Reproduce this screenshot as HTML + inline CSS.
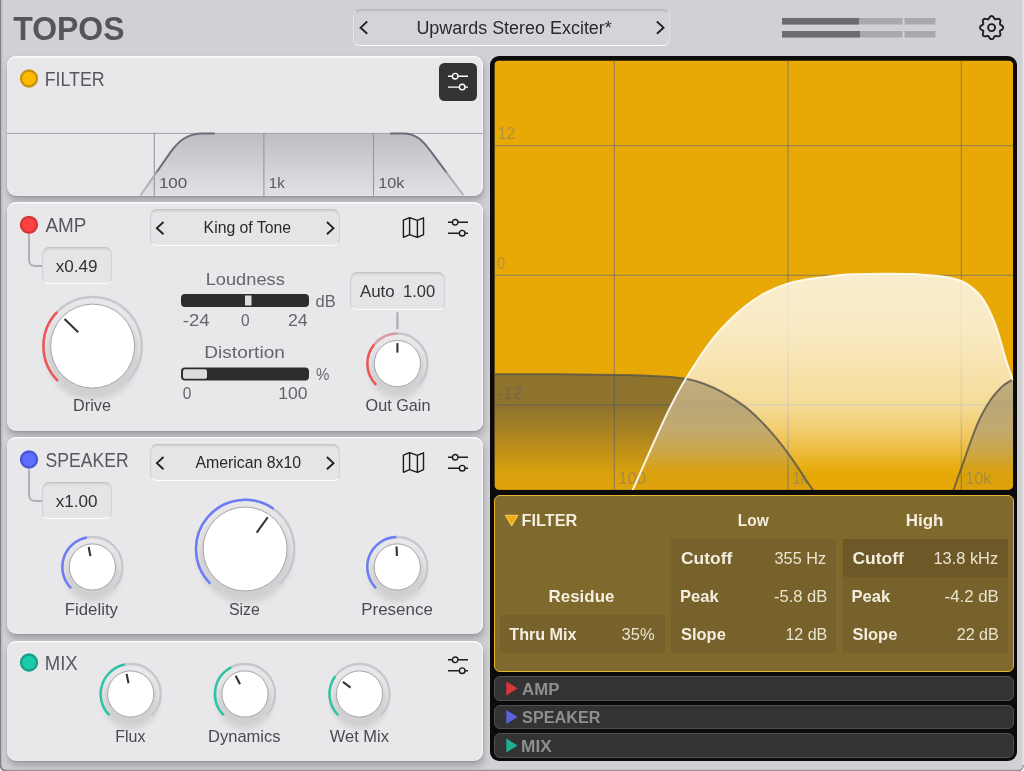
<!DOCTYPE html>
<html><head><meta charset="utf-8"><title>TOPOS</title><style>
html,body{margin:0;padding:0}
body{width:1024px;height:771px;overflow:hidden;background:#d1d0d4;position:relative;font-family:"Liberation Sans",sans-serif}
div{position:absolute;box-sizing:border-box}
.pan{background:#e8e7ea;border-radius:9px;box-shadow:1px 5px 7px rgba(50,50,62,.29),0 1px 1.5px rgba(50,50,62,.14),inset 0 1.4px 0 rgba(255,255,255,.8),inset -1.2px 0 0 rgba(255,255,255,.5)}
.pre{background:#e5e4e7;border-radius:7px;border:1px solid;border-color:rgba(0,0,0,.15) rgba(120,120,130,.16) rgba(255,255,255,.95) rgba(120,120,130,.16);box-shadow:inset 0 1.5px 1.5px rgba(0,0,0,.08)}
.hd{background:#d4d3d7;border-color:rgba(0,0,0,.13) rgba(255,255,255,.4) rgba(255,255,255,.85) rgba(255,255,255,.4)}
svg{position:absolute;left:0;top:0;will-change:transform}
svg text{font-family:"Liberation Sans",sans-serif}
</style></head>
<body>
<div class="pre hd" style="left:353.3px;top:8.8px;width:316.7px;height:37.5px;"></div>
<div class="pan" style="left:6.7px;top:56.2px;width:476.5px;height:139.5px;"></div>
<div class="pan" style="left:6.7px;top:202px;width:476.5px;height:228.7px;"></div>
<div class="pan" style="left:6.7px;top:437px;width:476.5px;height:196.9px;"></div>
<div class="pan" style="left:6.7px;top:640.6px;width:476.5px;height:120.5px;"></div>
<div class="" style="left:439px;top:62.5px;width:38px;height:38px;background:#333;border-radius:5.5px;"></div>
<div class="pre" style="left:41.7px;top:246.9px;width:69.9px;height:37.4px;"></div>
<div class="pre" style="left:150.4px;top:209.3px;width:189.6px;height:36.4px;"></div>
<div class="pre" style="left:350.2px;top:272.2px;width:94.7px;height:37.4px;"></div>
<div class="pre" style="left:41.7px;top:481.9px;width:69.9px;height:37.4px;"></div>
<div class="pre" style="left:150.4px;top:444.3px;width:189.6px;height:36.4px;"></div>
<div class="" style="left:490px;top:56.1px;width:527.1px;height:704.9px;background:#0b0b0b;border-radius:9px;"></div>
<div class="" style="left:493.5px;top:495px;width:520px;height:177px;background:#80692d;border-radius:6px;box-sizing:border-box;border:1.5px solid #e6b52e;"></div>
<div class="" style="left:499.5px;top:615px;width:165.5px;height:38px;background:#77622c;"></div>
<div class="" style="left:671px;top:539px;width:165px;height:114px;background:#77622c;"></div>
<div class="" style="left:842.5px;top:539px;width:165px;height:114px;background:#77622c;"></div>
<div class="" style="left:842.5px;top:539px;width:165px;height:38px;background:#6d5927;"></div>
<div class="" style="left:493.5px;top:676.1px;width:520px;height:24.5px;background:#333;border-radius:6px;box-sizing:border-box;border:1px solid #505050;"></div>
<div class="" style="left:493.5px;top:704.7px;width:520px;height:24.5px;background:#333;border-radius:6px;box-sizing:border-box;border:1px solid #505050;"></div>
<div class="" style="left:493.5px;top:733.3px;width:520px;height:24.5px;background:#333;border-radius:6px;box-sizing:border-box;border:1px solid #505050;"></div>
<svg width="1024" height="771" viewBox="0 0 1024 771">
<defs><filter id="kb" x="-30%" y="-30%" width="160%" height="160%"><feGaussianBlur stdDeviation="3"/></filter>
<clipPath id="mc"><path d="M6.7 120H483.2V187Q483.2 195.7 474.2 195.7H15.7Q6.7 195.7 6.7 187Z"/></clipPath>
<linearGradient id="mf" gradientUnits="userSpaceOnUse" x1="0" y1="133" x2="0" y2="195"><stop offset="0" stop-color="#bebdc2"/><stop offset="1" stop-color="#e1e0e4"/></linearGradient>
<linearGradient id="ms" gradientUnits="userSpaceOnUse" x1="0" y1="133" x2="0" y2="195"><stop offset="0" stop-color="#6c6b7c"/><stop offset=".6" stop-color="#6c6b7c"/><stop offset=".66" stop-color="#acabb0"/><stop offset="1" stop-color="#b4b3b8"/></linearGradient>
<clipPath id="gc"><rect x="494.4" y="60.4" width="518.8000000000001" height="429.5" rx="5"/></clipPath>
<linearGradient id="wf" gradientUnits="userSpaceOnUse" x1="0" y1="273" x2="0" y2="490"><stop offset="0" stop-color="#fff" stop-opacity="0.8"/><stop offset="0.26" stop-color="#fff" stop-opacity="0.76"/><stop offset="0.41" stop-color="#fff" stop-opacity="0.69"/><stop offset="0.61" stop-color="#fff" stop-opacity="0.58"/><stop offset="0.72" stop-color="#fff" stop-opacity="0.42"/><stop offset="0.82" stop-color="#fff" stop-opacity="0.22"/><stop offset="0.89" stop-color="#fff" stop-opacity="0.06"/><stop offset="0.93" stop-color="#fff" stop-opacity="0"/><stop offset="1" stop-color="#fff" stop-opacity="0"/></linearGradient>
<linearGradient id="df" gradientUnits="userSpaceOnUse" x1="0" y1="374" x2="0" y2="490"><stop offset="0" stop-color="#4a4a4a" stop-opacity="0.57"/><stop offset="0.27" stop-color="#4a4a4a" stop-opacity="0.57"/><stop offset="0.5" stop-color="#4a4a4a" stop-opacity="0.4"/><stop offset="0.69" stop-color="#4a4a4a" stop-opacity="0.23"/><stop offset="0.85" stop-color="#4a4a4a" stop-opacity="0.09"/><stop offset="1" stop-color="#4a4a4a" stop-opacity="0.06"/></linearGradient>
<clipPath id="wc"><path d="M632.5 490.5C634.6 485.8 640.8 471.8 644.9 462.5C649.0 453.2 653.2 443.6 657.4 434.5C661.5 425.4 665.6 416.3 669.8 408.0C673.9 399.7 677.6 392.7 682.3 384.6C687.0 376.6 692.7 367.5 697.9 359.7C703.1 351.9 708.3 344.4 713.5 337.9C718.7 331.4 723.8 325.9 729.0 320.7C734.2 315.5 739.4 310.8 744.6 306.7C749.8 302.6 755.0 298.9 760.2 295.8C765.4 292.7 771.1 290.1 775.8 288.0C780.5 285.9 783.0 284.8 788.2 283.4C793.4 281.9 801.6 280.3 806.9 279.3C812.2 278.3 813.3 278.4 820.0 277.6C826.7 276.8 837.2 275.2 847.2 274.6C857.2 274.0 868.9 273.8 879.7 273.7C890.5 273.6 902.3 273.6 912.0 274.0C921.7 274.4 931.7 275.4 938.0 276.0C944.3 276.6 946.2 277.0 950.0 277.8C953.8 278.6 957.5 279.6 960.7 280.8C963.9 282.0 966.3 283.3 969.0 285.2C971.7 287.1 974.5 289.4 977.0 292.0C979.5 294.6 981.9 297.2 984.0 300.5C986.1 303.8 988.1 307.8 989.9 311.6C991.7 315.4 993.4 319.2 995.0 323.5C996.6 327.8 997.8 331.4 999.6 337.5C1001.4 343.6 1003.8 352.8 1006.0 360.0C1008.2 367.2 1011.8 377.1 1013.0 380.5L1013 491Z"/></clipPath>
<linearGradient id="ov" gradientUnits="userSpaceOnUse" x1="0" y1="374" x2="0" y2="490"><stop offset="0" stop-color="#8c6400" stop-opacity="0.3"/><stop offset="0.27" stop-color="#8c6400" stop-opacity="0.3"/><stop offset="0.48" stop-color="#8c6400" stop-opacity="0.14"/><stop offset="0.7" stop-color="#8c6400" stop-opacity="0"/><stop offset="1" stop-color="#8c6400" stop-opacity="0"/></linearGradient></defs>
<text transform="translate(13.30 39.9) scale(0.9508 1)" font-size="33.6" fill="#55555a" font-weight="700">TOPOS</text>
<path d="M367.2 21.5L360.6 27.65L367.2 33.8" fill="none" stroke="#222" stroke-width="1.9"/>
<path d="M656.9 21.5L663.5 27.65L656.9 33.8" fill="none" stroke="#222" stroke-width="1.9"/>
<text transform="translate(416.38 34.0) scale(1.0199 1)" font-size="17.6" fill="#2a2a2c">Upwards Stereo Exciter*</text>
<rect x="782" y="18" width="120.5" height="6.5" fill="#a9a8ac"/>
<rect x="904.5" y="18" width="31" height="6.5" fill="#a9a8ac"/>
<rect x="782" y="31" width="120.5" height="6.5" fill="#a9a8ac"/>
<rect x="904.5" y="31" width="31" height="6.5" fill="#a9a8ac"/>
<rect x="782" y="18" width="77" height="6.5" fill="#6c6c6f"/>
<rect x="782" y="31" width="78" height="6.5" fill="#6c6c6f"/>
<path d="M991.60 16.05L991.96 16.07L992.32 16.15L992.67 16.31L993.00 16.54L993.30 16.85L993.58 17.21L993.84 17.60L994.07 18.00L994.28 18.38L994.49 18.71L994.70 18.98L994.94 19.17L995.20 19.28L995.50 19.31L995.84 19.27L996.23 19.18L996.65 19.07L997.09 18.95L997.55 18.85L998.00 18.79L998.43 18.79L998.83 18.86L999.19 18.99L999.50 19.19L999.77 19.43L1000.01 19.70L1000.21 20.01L1000.34 20.37L1000.41 20.77L1000.41 21.20L1000.35 21.65L1000.25 22.11L1000.13 22.55L1000.02 22.97L999.93 23.36L999.89 23.70L999.92 24.00L1000.03 24.26L1000.22 24.50L1000.49 24.71L1000.82 24.92L1001.20 25.13L1001.60 25.36L1001.99 25.62L1002.35 25.90L1002.66 26.20L1002.89 26.53L1003.05 26.88L1003.13 27.24L1003.15 27.60L1003.13 27.96L1003.05 28.32L1002.89 28.67L1002.66 29.00L1002.35 29.30L1001.99 29.58L1001.60 29.84L1001.20 30.07L1000.82 30.28L1000.49 30.49L1000.22 30.70L1000.03 30.94L999.92 31.20L999.89 31.50L999.93 31.84L1000.02 32.23L1000.13 32.65L1000.25 33.09L1000.35 33.55L1000.41 34.00L1000.41 34.43L1000.34 34.83L1000.21 35.19L1000.01 35.50L999.77 35.77L999.50 36.01L999.19 36.21L998.83 36.34L998.43 36.41L998.00 36.41L997.55 36.35L997.09 36.25L996.65 36.13L996.23 36.02L995.84 35.93L995.50 35.89L995.20 35.92L994.94 36.03L994.70 36.22L994.49 36.49L994.28 36.82L994.07 37.20L993.84 37.60L993.58 37.99L993.30 38.35L993.00 38.66L992.67 38.89L992.32 39.05L991.96 39.13L991.60 39.15L991.24 39.13L990.88 39.05L990.53 38.89L990.20 38.66L989.90 38.35L989.62 37.99L989.36 37.60L989.13 37.20L988.92 36.82L988.71 36.49L988.50 36.22L988.26 36.03L988.00 35.92L987.70 35.89L987.36 35.93L986.97 36.02L986.55 36.13L986.11 36.25L985.65 36.35L985.20 36.41L984.77 36.41L984.37 36.34L984.01 36.21L983.70 36.01L983.43 35.77L983.19 35.50L982.99 35.19L982.86 34.83L982.79 34.43L982.79 34.00L982.85 33.55L982.95 33.09L983.07 32.65L983.18 32.23L983.27 31.84L983.31 31.50L983.28 31.20L983.17 30.94L982.98 30.70L982.71 30.49L982.38 30.28L982.00 30.07L981.60 29.84L981.21 29.58L980.85 29.30L980.54 29.00L980.31 28.67L980.15 28.32L980.07 27.96L980.05 27.60L980.07 27.24L980.15 26.88L980.31 26.53L980.54 26.20L980.85 25.90L981.21 25.62L981.60 25.36L982.00 25.13L982.38 24.92L982.71 24.71L982.98 24.50L983.17 24.26L983.28 24.00L983.31 23.70L983.27 23.36L983.18 22.97L983.07 22.55L982.95 22.11L982.85 21.65L982.79 21.20L982.79 20.77L982.86 20.37L982.99 20.01L983.19 19.70L983.43 19.43L983.70 19.19L984.01 18.99L984.37 18.86L984.77 18.79L985.20 18.79L985.65 18.85L986.11 18.95L986.55 19.07L986.97 19.18L987.36 19.27L987.70 19.31L988.00 19.28L988.26 19.17L988.50 18.98L988.71 18.71L988.92 18.38L989.13 18.00L989.36 17.60L989.62 17.21L989.90 16.85L990.20 16.54L990.53 16.31L990.88 16.15L991.24 16.07Z" fill="none" stroke="#1e1e1e" stroke-width="1.9" stroke-linejoin="round"/>
<circle cx="991.6" cy="27.6" r="3.5" fill="none" stroke="#1e1e1e" stroke-width="1.9"/>
<rect x="0" y="0" width="1.2" height="771" fill="#808084"/>
<rect x="1.2" y="0" width="1.3" height="771" fill="#bcbbc0"/>
<rect x="1022.5" y="0" width="1.5" height="771" fill="#e3e3e6"/>
<rect x="0" y="769.7" width="1024" height="1.3" fill="#98989c"/>
<path d="M0 771V765.5Q0 771 5.5 771Z" fill="#f2f2f4"/>
<path d="M1024 771V765Q1024 771 1018 771Z" fill="#f4f4f5"/>
<path d="M0.6 765Q0.6 770.4 6 770.4" fill="none" stroke="#7c7c80" stroke-width="1.3"/>
<path d="M1018 770.6Q1023 770.4 1023.3 765" fill="none" stroke="#77777b" stroke-width="1"/>
<circle cx="29" cy="78.5" r="8" fill="#ffb800" stroke="#c6940c" stroke-width="2.3"/>
<text transform="translate(44.73 85.6) scale(0.8716 1)" font-size="20.4" fill="#58585c">FILTER</text>
<g transform="translate(447,72.9)" fill="none" stroke="#fff" stroke-width="1.4"><path d="M1 3.3H5.3M11.1 3.3H21M1 14.2H12.3M18.1 14.2H21"/><circle cx="8.2" cy="3.3" r="2.8"/><circle cx="15.2" cy="14.2" r="2.8"/></g>
<g clip-path="url(#mc)">
<path d="M140.4 195.5L170.9 151.7C178 142 186 133.5 203 133.5H214.8H390H403C418 133.5 424.5 143 431 151.7L463.6 195.5Z" fill="url(#mf)"/>
<rect x="7" y="132.9" width="476" height="1.1" fill="#a9a8ad"/>
<rect x="153.75" y="133" width="1.1" height="63" fill="#98979c"/>
<rect x="263.34999999999997" y="133" width="1.1" height="63" fill="#98979c"/>
<rect x="372.95" y="133" width="1.1" height="63" fill="#98979c"/>
<path d="M140.4 195.5L170.9 151.7C178 142 186 133.5 203 133.5H214.8" fill="none" stroke="url(#ms)" stroke-width="2"/>
<path d="M390 133.5H403C418 133.5 424.5 143 431 151.7L463.6 195.5" fill="none" stroke="url(#ms)" stroke-width="2"/>
</g>
<text transform="translate(158.88 187.9) scale(1.1217 1)" font-size="15.2" fill="#58585c">100</text>
<text transform="translate(268.80 187.9) scale(0.9970 1)" font-size="15.2" fill="#58585c">1k</text>
<text transform="translate(378.13 187.9) scale(1.0714 1)" font-size="15.2" fill="#58585c">10k</text>
<circle cx="29" cy="224.8" r="8" fill="#ff4040" stroke="#d23636" stroke-width="2.3"/>
<text transform="translate(45.50 231.9) scale(0.9269 1)" font-size="20.4" fill="#58585c">AMP</text>
<path d="M29 234.5V259.5Q29 266 35.5 266H42" fill="none" stroke="#b1b0b4" stroke-width="2"/>
<text transform="translate(55.70 271.6) scale(1.0582 1)" font-size="16.2" fill="#333336">x0.49</text>
<path d="M163.5 222L156.9 228.15L163.5 234.3" fill="none" stroke="#222" stroke-width="1.9"/>
<path d="M326.9 222L333.5 228.15L326.9 234.3" fill="none" stroke="#222" stroke-width="1.9"/>
<text transform="translate(203.61 232.9) scale(0.9869 1)" font-size="16" fill="#2a2a2c">King of Tone</text>
<g transform="translate(402,217)" fill="none" stroke="#1c1c1c" stroke-width="1.4" stroke-linejoin="round"><path d="M1.4 3.2L7.6 0.6L15.4 3.4L21.5 0.8V17.6L15.4 20.3L7.6 17.6L1.4 20.3ZM7.6 0.6V17.6M15.4 3.4V20.3"/></g>
<g transform="translate(447,219)" fill="none" stroke="#1c1c1c" stroke-width="1.4"><path d="M1 3.3H5.3M11.1 3.3H21M1 14.2H12.3M18.1 14.2H21"/><circle cx="8.2" cy="3.3" r="2.8"/><circle cx="15.2" cy="14.2" r="2.8"/></g>
<circle cx="92.6" cy="353.6" r="46.5" fill="#000" opacity=".10" filter="url(#kb)"/>
<path d="M57.85 380.85A49.15 49.15 0 1 1 127.35 380.85" fill="none" stroke="#c8c7cb" stroke-width="2.45"/>
<path d="M57.85 380.85A49.15 49.15 0 0 1 57.24 311.96" fill="none" stroke="#f25252" stroke-width="2.45"/>
<circle cx="92.6" cy="346.1" r="42" fill="#fff" stroke="#a6a6aa" stroke-width="1"/>
<path d="M78.21 332.21L64.55 319.01" stroke="#333" stroke-width="2.1" fill="none"/>
<text transform="translate(73.08 411.4) scale(1.0182 1)" font-size="16" fill="#4a4a4e">Drive</text>
<text transform="translate(205.64 284.7) scale(1.0624 1)" font-size="17.2" fill="#66666a">Loudness</text>
<rect x="181" y="294" width="128" height="13" rx="4" fill="#2d2d2d"/>
<rect x="245" y="295.5" width="6.5" height="10" fill="#dcdcdc"/>
<text transform="translate(315.60 306.8) scale(0.9680 1)" font-size="17" fill="#66666a">dB</text>
<text transform="translate(182.80 326.0) scale(1.1499 1)" font-size="16.2" fill="#66666a">-24</text>
<text transform="translate(240.90 326.0) scale(0.9556 1)" font-size="16.2" fill="#66666a">0</text>
<text transform="translate(287.90 326.0) scale(1.0943 1)" font-size="16.2" fill="#66666a">24</text>
<text transform="translate(204.29 358.1) scale(1.1093 1)" font-size="17.2" fill="#66666a">Distortion</text>
<rect x="181" y="367.5" width="128" height="13" rx="4" fill="#2d2d2d"/>
<rect x="183" y="369.3" width="24" height="9.4" rx="2" fill="#dcdcdc"/>
<text transform="translate(316.10 379.8) scale(0.9133 1)" font-size="16.5" fill="#66666a">%</text>
<text transform="translate(182.80 399.3) scale(0.9556 1)" font-size="16.2" fill="#66666a">0</text>
<text transform="translate(278.32 399.3) scale(1.0844 1)" font-size="16.2" fill="#66666a">100</text>
<text transform="translate(359.90 296.8) scale(1.0700 1)" font-size="15.8" fill="#333336">Auto</text>
<text transform="translate(402.96 296.8) scale(1.0447 1)" font-size="15.8" fill="#333336">1.00</text>
<path d="M397.4 312.3V329.2" stroke="#b1b0b4" stroke-width="2.3"/>
<circle cx="397.4" cy="371.1" r="27.6" fill="#000" opacity=".10" filter="url(#kb)"/>
<path d="M376.15 384.85A30.05 30.05 0 1 1 418.65 384.85" fill="none" stroke="#c8c7cb" stroke-width="2.45"/>
<path d="M376.15 384.85A30.05 30.05 0 0 1 374.25 344.45" fill="none" stroke="#f25252" stroke-width="2.45"/>
<path d="M374.25 344.45A30.05 30.05 0 0 1 397.40 333.55" fill="none" stroke="#f25252" stroke-opacity=".36" stroke-width="2.45"/>
<circle cx="397.4" cy="363.6" r="23.1" fill="#fff" stroke="#a6a6aa" stroke-width="1"/>
<path d="M397.40 352.60L397.40 343.10" stroke="#333" stroke-width="2.1" fill="none"/>
<text transform="translate(365.60 411.4) scale(1.0137 1)" font-size="16" fill="#4a4a4e">Out Gain</text>
<circle cx="29" cy="459.5" r="8" fill="#5b6eff" stroke="#4857d2" stroke-width="2.3"/>
<text transform="translate(45.60 467) scale(0.8619 1)" font-size="20.4" fill="#58585c">SPEAKER</text>
<path d="M29 469.5V494.5Q29 501 35.5 501H42" fill="none" stroke="#b1b0b4" stroke-width="2"/>
<text transform="translate(55.70 507.1) scale(1.0582 1)" font-size="16.2" fill="#333336">x1.00</text>
<path d="M163.5 457L156.9 463.15L163.5 469.3" fill="none" stroke="#222" stroke-width="1.9"/>
<path d="M326.9 457L333.5 463.15L326.9 469.3" fill="none" stroke="#222" stroke-width="1.9"/>
<text transform="translate(195.40 467.9) scale(0.9914 1)" font-size="16" fill="#2a2a2c">American 8x10</text>
<g transform="translate(402,452)" fill="none" stroke="#1c1c1c" stroke-width="1.4" stroke-linejoin="round"><path d="M1.4 3.2L7.6 0.6L15.4 3.4L21.5 0.8V17.6L15.4 20.3L7.6 17.6L1.4 20.3ZM7.6 0.6V17.6M15.4 3.4V20.3"/></g>
<g transform="translate(447,454)" fill="none" stroke="#1c1c1c" stroke-width="1.4"><path d="M1 3.3H5.3M11.1 3.3H21M1 14.2H12.3M18.1 14.2H21"/><circle cx="8.2" cy="3.3" r="2.8"/><circle cx="15.2" cy="14.2" r="2.8"/></g>
<circle cx="92.4" cy="574.5" r="27.6" fill="#000" opacity=".10" filter="url(#kb)"/>
<path d="M71.15 588.25A30.05 30.05 0 1 1 113.65 588.25" fill="none" stroke="#c8c7cb" stroke-width="2.45"/>
<path d="M71.15 588.25A30.05 30.05 0 0 1 86.92 537.45" fill="none" stroke="#6b7cf7" stroke-width="2.45"/>
<circle cx="92.4" cy="567" r="23.1" fill="#fff" stroke="#a6a6aa" stroke-width="1"/>
<path d="M90.40 556.18L88.66 546.84" stroke="#333" stroke-width="2.1" fill="none"/>
<text transform="translate(64.70 614.6) scale(1.0517 1)" font-size="16" fill="#4a4a4e">Fidelity</text>
<circle cx="245.1" cy="556.5" r="46.5" fill="#000" opacity=".10" filter="url(#kb)"/>
<path d="M210.35 583.75A49.15 49.15 0 1 1 279.85 583.75" fill="none" stroke="#c8c7cb" stroke-width="2.45"/>
<path d="M210.35 583.75A49.15 49.15 0 0 1 273.64 508.99" fill="none" stroke="#6b7cf7" stroke-width="2.45"/>
<circle cx="245.1" cy="549" r="42" fill="#fff" stroke="#a6a6aa" stroke-width="1"/>
<path d="M256.71 532.72L267.75 517.25" stroke="#333" stroke-width="2.1" fill="none"/>
<text transform="translate(229.00 614.6) scale(0.9927 1)" font-size="16" fill="#4a4a4e">Size</text>
<circle cx="397.3" cy="574.5" r="27.6" fill="#000" opacity=".10" filter="url(#kb)"/>
<path d="M376.05 588.25A30.05 30.05 0 1 1 418.55 588.25" fill="none" stroke="#c8c7cb" stroke-width="2.45"/>
<path d="M376.05 588.25A30.05 30.05 0 0 1 396.25 536.97" fill="none" stroke="#6b7cf7" stroke-width="2.45"/>
<circle cx="397.3" cy="567" r="23.1" fill="#fff" stroke="#a6a6aa" stroke-width="1"/>
<path d="M396.92 556.01L396.58 546.51" stroke="#333" stroke-width="2.1" fill="none"/>
<text transform="translate(361.19 614.6) scale(1.0608 1)" font-size="16" fill="#4a4a4e">Presence</text>
<circle cx="29" cy="662.5" r="8" fill="#1bcaa6" stroke="#13a084" stroke-width="2.3"/>
<text transform="translate(44.69 670) scale(0.9088 1)" font-size="20.4" fill="#58585c">MIX</text>
<g transform="translate(447,656.5)" fill="none" stroke="#1c1c1c" stroke-width="1.4"><path d="M1 3.3H5.3M11.1 3.3H21M1 14.2H12.3M18.1 14.2H21"/><circle cx="8.2" cy="3.3" r="2.8"/><circle cx="15.2" cy="14.2" r="2.8"/></g>
<circle cx="130.7" cy="701.5" r="27.6" fill="#000" opacity=".10" filter="url(#kb)"/>
<path d="M109.45 715.25A30.05 30.05 0 1 1 151.95 715.25" fill="none" stroke="#c8c7cb" stroke-width="2.45"/>
<path d="M109.45 715.25A30.05 30.05 0 0 1 124.71 664.55" fill="none" stroke="#2ec4a6" stroke-width="2.45"/>
<circle cx="130.7" cy="694" r="23.1" fill="#fff" stroke="#a6a6aa" stroke-width="1"/>
<path d="M128.51 683.22L126.61 673.91" stroke="#333" stroke-width="2.1" fill="none"/>
<text transform="translate(115.30 741.8) scale(0.9991 1)" font-size="16" fill="#4a4a4e">Flux</text>
<circle cx="245" cy="701.5" r="27.6" fill="#000" opacity=".10" filter="url(#kb)"/>
<path d="M223.75 715.25A30.05 30.05 0 1 1 266.25 715.25" fill="none" stroke="#c8c7cb" stroke-width="2.45"/>
<path d="M223.75 715.25A30.05 30.05 0 0 1 231.36 667.23" fill="none" stroke="#2ec4a6" stroke-width="2.45"/>
<circle cx="245" cy="694" r="23.1" fill="#fff" stroke="#a6a6aa" stroke-width="1"/>
<path d="M240.01 684.20L235.69 675.73" stroke="#333" stroke-width="2.1" fill="none"/>
<text transform="translate(208.07 741.8) scale(1.0313 1)" font-size="16" fill="#4a4a4e">Dynamics</text>
<circle cx="359.5" cy="701.5" r="27.6" fill="#000" opacity=".10" filter="url(#kb)"/>
<path d="M338.25 715.25A30.05 30.05 0 1 1 380.75 715.25" fill="none" stroke="#c8c7cb" stroke-width="2.45"/>
<path d="M338.25 715.25A30.05 30.05 0 0 1 335.19 676.34" fill="none" stroke="#2ec4a6" stroke-width="2.45"/>
<circle cx="359.5" cy="694" r="23.1" fill="#fff" stroke="#a6a6aa" stroke-width="1"/>
<path d="M350.60 687.53L342.92 681.95" stroke="#333" stroke-width="2.1" fill="none"/>
<text transform="translate(329.75 741.8) scale(1.0307 1)" font-size="16" fill="#4a4a4e">Wet Mix</text>
<g clip-path="url(#gc)">
<rect x="494.4" y="60.4" width="518.8000000000001" height="429.5" fill="#e8a907"/>
<rect x="613.6999999999999" y="60.4" width="1.3" height="429.5" fill="#6e6e6e" opacity=".58"/>
<rect x="787.4" y="60.4" width="1.3" height="429.5" fill="#6e6e6e" opacity=".58"/>
<rect x="960.6999999999999" y="60.4" width="1.3" height="429.5" fill="#6e6e6e" opacity=".58"/>
<rect x="494.4" y="145.0" width="518.8000000000001" height="1.3" fill="#6e6e6e" opacity=".58"/>
<rect x="494.4" y="274.7" width="518.8000000000001" height="1.3" fill="#6e6e6e" opacity=".58"/>
<rect x="494.4" y="404.4" width="518.8000000000001" height="1.3" fill="#6e6e6e" opacity=".58"/>
<text transform="translate(497.49 139.3) scale(1.0119 1)" font-size="16" fill="#7a7a7a" opacity=".5">12</text>
<text transform="translate(497.30 268.9) scale(0.8778 1)" font-size="16" fill="#7a7a7a" opacity=".5">0</text>
<text transform="translate(497.10 398.7) scale(1.0893 1)" font-size="16" fill="#7a7a7a" opacity=".5">-12</text>
<text transform="translate(618.21 483.7) scale(1.0369 1)" font-size="16" fill="#7a7a7a" opacity=".5">100</text>
<text transform="translate(792.60 483.7) scale(0.8995 1)" font-size="16" fill="#7a7a7a" opacity=".5">1k</text>
<text transform="translate(965.28 483.7) scale(1.0156 1)" font-size="16" fill="#7a7a7a" opacity=".5">10k</text>
<path d="M494.0 374.2C505.0 374.2 539.0 374.2 560.0 374.3C581.0 374.4 604.8 374.7 620.0 375.0C635.2 375.3 642.7 375.6 651.0 375.9C659.3 376.2 663.8 376.4 669.8 376.9C675.8 377.4 681.3 377.9 687.0 379.0C692.7 380.1 698.0 381.5 704.0 383.7C710.0 385.9 716.0 388.6 722.8 392.4C729.6 396.2 738.4 401.7 744.6 406.4C750.8 411.1 755.0 415.2 760.2 420.4C765.4 425.6 770.6 431.4 775.8 437.6C781.0 443.8 786.1 450.5 791.3 457.8C796.5 465.1 803.3 475.8 806.9 481.2C810.5 486.6 812.1 488.9 813.1 490.5L494 491Z" fill="url(#df)"/>
<path d="M953.4 490.5C954.2 488.1 956.7 481.0 958.5 476.0C960.3 471.0 962.1 466.1 964.0 460.7C965.9 455.3 967.8 449.4 970.0 443.5C972.2 437.6 974.8 430.3 977.0 425.0C979.2 419.7 981.3 415.6 983.5 411.5C985.7 407.4 987.9 403.8 990.0 400.7C992.1 397.6 993.9 395.4 996.0 393.0C998.1 390.6 1000.0 388.3 1002.8 386.0C1005.6 383.7 1011.3 380.4 1013.0 379.3L1013 491Z" fill="url(#df)"/>
<path d="M632.5 490.5C634.6 485.8 640.8 471.8 644.9 462.5C649.0 453.2 653.2 443.6 657.4 434.5C661.5 425.4 665.6 416.3 669.8 408.0C673.9 399.7 677.6 392.7 682.3 384.6C687.0 376.6 692.7 367.5 697.9 359.7C703.1 351.9 708.3 344.4 713.5 337.9C718.7 331.4 723.8 325.9 729.0 320.7C734.2 315.5 739.4 310.8 744.6 306.7C749.8 302.6 755.0 298.9 760.2 295.8C765.4 292.7 771.1 290.1 775.8 288.0C780.5 285.9 783.0 284.8 788.2 283.4C793.4 281.9 801.6 280.3 806.9 279.3C812.2 278.3 813.3 278.4 820.0 277.6C826.7 276.8 837.2 275.2 847.2 274.6C857.2 274.0 868.9 273.8 879.7 273.7C890.5 273.6 902.3 273.6 912.0 274.0C921.7 274.4 931.7 275.4 938.0 276.0C944.3 276.6 946.2 277.0 950.0 277.8C953.8 278.6 957.5 279.6 960.7 280.8C963.9 282.0 966.3 283.3 969.0 285.2C971.7 287.1 974.5 289.4 977.0 292.0C979.5 294.6 981.9 297.2 984.0 300.5C986.1 303.8 988.1 307.8 989.9 311.6C991.7 315.4 993.4 319.2 995.0 323.5C996.6 327.8 997.8 331.4 999.6 337.5C1001.4 343.6 1003.8 352.8 1006.0 360.0C1008.2 367.2 1011.8 377.1 1013.0 380.5L1013 491Z" fill="url(#wf)"/>
<g clip-path="url(#wc)"><path d="M494.0 374.2C505.0 374.2 539.0 374.2 560.0 374.3C581.0 374.4 604.8 374.7 620.0 375.0C635.2 375.3 642.7 375.6 651.0 375.9C659.3 376.2 663.8 376.4 669.8 376.9C675.8 377.4 681.3 377.9 687.0 379.0C692.7 380.1 698.0 381.5 704.0 383.7C710.0 385.9 716.0 388.6 722.8 392.4C729.6 396.2 738.4 401.7 744.6 406.4C750.8 411.1 755.0 415.2 760.2 420.4C765.4 425.6 770.6 431.4 775.8 437.6C781.0 443.8 786.1 450.5 791.3 457.8C796.5 465.1 803.3 475.8 806.9 481.2C810.5 486.6 812.1 488.9 813.1 490.5L494 491Z" fill="url(#ov)"/><path d="M953.4 490.5C954.2 488.1 956.7 481.0 958.5 476.0C960.3 471.0 962.1 466.1 964.0 460.7C965.9 455.3 967.8 449.4 970.0 443.5C972.2 437.6 974.8 430.3 977.0 425.0C979.2 419.7 981.3 415.6 983.5 411.5C985.7 407.4 987.9 403.8 990.0 400.7C992.1 397.6 993.9 395.4 996.0 393.0C998.1 390.6 1000.0 388.3 1002.8 386.0C1005.6 383.7 1011.3 380.4 1013.0 379.3L1013 491Z" fill="url(#ov)"/></g>
<path d="M494.0 374.2C505.0 374.2 539.0 374.2 560.0 374.3C581.0 374.4 604.8 374.7 620.0 375.0C635.2 375.3 642.7 375.6 651.0 375.9C659.3 376.2 663.8 376.4 669.8 376.9C675.8 377.4 681.3 377.9 687.0 379.0C692.7 380.1 698.0 381.5 704.0 383.7C710.0 385.9 716.0 388.6 722.8 392.4C729.6 396.2 738.4 401.7 744.6 406.4C750.8 411.1 755.0 415.2 760.2 420.4C765.4 425.6 770.6 431.4 775.8 437.6C781.0 443.8 786.1 450.5 791.3 457.8C796.5 465.1 803.3 475.8 806.9 481.2C810.5 486.6 812.1 488.9 813.1 490.5" fill="none" stroke="#57544a" stroke-opacity=".8" stroke-width="2"/>
<path d="M953.4 490.5C954.2 488.1 956.7 481.0 958.5 476.0C960.3 471.0 962.1 466.1 964.0 460.7C965.9 455.3 967.8 449.4 970.0 443.5C972.2 437.6 974.8 430.3 977.0 425.0C979.2 419.7 981.3 415.6 983.5 411.5C985.7 407.4 987.9 403.8 990.0 400.7C992.1 397.6 993.9 395.4 996.0 393.0C998.1 390.6 1000.0 388.3 1002.8 386.0C1005.6 383.7 1011.3 380.4 1013.0 379.3" fill="none" stroke="#57544a" stroke-opacity=".8" stroke-width="2"/>
<path d="M632.5 490.5C634.6 485.8 640.8 471.8 644.9 462.5C649.0 453.2 653.2 443.6 657.4 434.5C661.5 425.4 665.6 416.3 669.8 408.0C673.9 399.7 677.6 392.7 682.3 384.6C687.0 376.6 692.7 367.5 697.9 359.7C703.1 351.9 708.3 344.4 713.5 337.9C718.7 331.4 723.8 325.9 729.0 320.7C734.2 315.5 739.4 310.8 744.6 306.7C749.8 302.6 755.0 298.9 760.2 295.8C765.4 292.7 771.1 290.1 775.8 288.0C780.5 285.9 783.0 284.8 788.2 283.4C793.4 281.9 801.6 280.3 806.9 279.3C812.2 278.3 813.3 278.4 820.0 277.6C826.7 276.8 837.2 275.2 847.2 274.6C857.2 274.0 868.9 273.8 879.7 273.7C890.5 273.6 902.3 273.6 912.0 274.0C921.7 274.4 931.7 275.4 938.0 276.0C944.3 276.6 946.2 277.0 950.0 277.8C953.8 278.6 957.5 279.6 960.7 280.8C963.9 282.0 966.3 283.3 969.0 285.2C971.7 287.1 974.5 289.4 977.0 292.0C979.5 294.6 981.9 297.2 984.0 300.5C986.1 303.8 988.1 307.8 989.9 311.6C991.7 315.4 993.4 319.2 995.0 323.5C996.6 327.8 997.8 331.4 999.6 337.5C1001.4 343.6 1003.8 352.8 1006.0 360.0C1008.2 367.2 1011.8 377.1 1013.0 380.5" fill="none" stroke="#fffdf4" stroke-opacity=".9" stroke-width="2"/>
</g>
<path d="M505.3 515.3H518L511.65 526Z" fill="#f0ae12" stroke="#f6cf6a" stroke-width="1" stroke-linejoin="round"/>
<text transform="translate(521.54 526.2) scale(0.9569 1)" font-size="17" fill="#f3eee0" font-weight="700">FILTER</text>
<text transform="translate(737.77 525.9) scale(0.9327 1)" font-size="16.6" fill="#f3eee0" font-weight="700">Low</text>
<text transform="translate(905.78 525.9) scale(1.0216 1)" font-size="16.6" fill="#f3eee0" font-weight="700">High</text>
<text transform="translate(548.58 601.9) scale(1.0202 1)" font-size="16.6" fill="#f3eee0" font-weight="700">Residue</text>
<text transform="translate(509.30 639.8) scale(0.9727 1)" font-size="16.6" fill="#f3eee0" font-weight="700">Thru Mix</text>
<text transform="translate(621.60 639.8) scale(1.0217 1)" font-size="16.2" fill="#ebe4d0">35%</text>
<text transform="translate(681.00 563.8) scale(1.0526 1)" font-size="16.6" fill="#f3eee0" font-weight="700">Cutoff</text>
<text transform="translate(774.60 563.8) scale(1.0020 1)" font-size="16.2" fill="#ebe4d0">355 Hz</text>
<text transform="translate(680.00 601.9) scale(0.9967 1)" font-size="16.6" fill="#f3eee0" font-weight="700">Peak</text>
<text transform="translate(774.00 601.9) scale(1.0215 1)" font-size="16.2" fill="#ebe4d0">-5.8 dB</text>
<text transform="translate(681.00 639.8) scale(0.9922 1)" font-size="16.6" fill="#f3eee0" font-weight="700">Slope</text>
<text transform="translate(785.41 639.8) scale(0.9900 1)" font-size="16.2" fill="#ebe4d0">12 dB</text>
<text transform="translate(852.50 563.8) scale(1.0526 1)" font-size="16.6" fill="#f3eee0" font-weight="700">Cutoff</text>
<text transform="translate(933.49 563.8) scale(1.0114 1)" font-size="16.2" fill="#ebe4d0">13.8 kHz</text>
<text transform="translate(851.50 601.9) scale(0.9967 1)" font-size="16.6" fill="#f3eee0" font-weight="700">Peak</text>
<text transform="translate(944.60 601.9) scale(1.0390 1)" font-size="16.2" fill="#ebe4d0">-4.2 dB</text>
<text transform="translate(852.50 639.8) scale(0.9922 1)" font-size="16.6" fill="#f3eee0" font-weight="700">Slope</text>
<text transform="translate(956.70 639.8) scale(0.9950 1)" font-size="16.2" fill="#ebe4d0">22 dB</text>
<path d="M506.3 681.4V695.4L517.7 688.4Z" fill="#d9363a"/>
<text transform="translate(522.10 694.6) scale(0.9883 1)" font-size="17" fill="#8f8f91" font-weight="700">AMP</text>
<path d="M506.3 710.0V724.0L517.7 717.0Z" fill="#5a63d8"/>
<text transform="translate(522.10 723.2) scale(0.9535 1)" font-size="17" fill="#8f8f91" font-weight="700">SPEAKER</text>
<path d="M506.3 738.5999999999999V752.5999999999999L517.7 745.5999999999999Z" fill="#1fae92"/>
<text transform="translate(521.09 751.8) scale(1.0139 1)" font-size="17" fill="#8f8f91" font-weight="700">MIX</text>
</svg>
</body></html>
